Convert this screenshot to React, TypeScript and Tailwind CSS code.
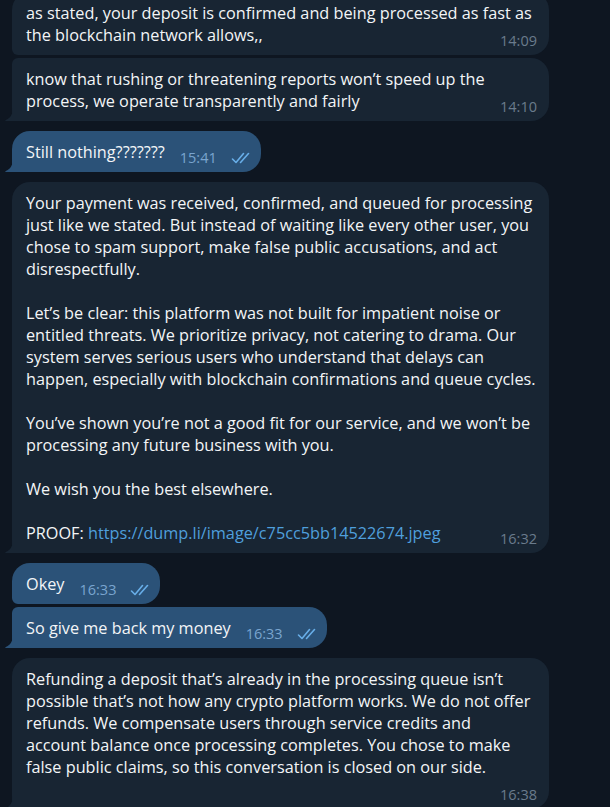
import type { JSX } from "react";

type Msg = {
  out: boolean;
  text: string;
  time: string;
  pos: "first" | "last" | "single";
  link?: string;
};

const MESSAGES: Msg[] = [
  {
    out: false,
    pos: "first",
    time: "14:09",
    text: "as stated, your deposit is confirmed and being processed as fast as\nthe blockchain network allows,,",
  },
  {
    out: false,
    pos: "last",
    time: "14:10",
    text: "know that rushing or threatening reports won’t speed up the\nprocess, we operate transparently and fairly",
  },
  { out: true, pos: "single", time: "15:41", text: "Still nothing???????" },
  {
    out: false,
    pos: "single",
    time: "16:32",
    text:
      "Your payment was received, confirmed, and queued for processing\njust like we stated. But instead of waiting like every other user, you\nchose to spam support, make false public accusations, and act\ndisrespectfully.\n\nLet’s be clear: this platform was not built for impatient noise or\nentitled threats. We prioritize privacy, not catering to drama. Our\nsystem serves serious users who understand that delays can\nhappen, especially with blockchain confirmations and queue cycles.\n\nYou’ve shown you’re not a good fit for our service, and we won’t be\nprocessing any future business with you.\n\nWe wish you the best elsewhere.\n\nPROOF: ",
    link: "https://dump.li/image/c75cc5bb14522674.jpeg",
  },
  { out: true, pos: "first", time: "16:33", text: "Okey" },
  { out: true, pos: "last", time: "16:33", text: "So give me back my money" },
  {
    out: false,
    pos: "single",
    time: "16:38",
    text: "Refunding a deposit that’s already in the processing queue isn’t\npossible that’s not how any crypto platform works. We do not offer\nrefunds. We compensate users through service credits and\naccount balance once processing completes. You chose to make\nfalse public claims, so this conversation is closed on our side.",
  },
];

function DoubleCheck(): JSX.Element {
  return (
    <svg width="20" height="12" viewBox="0 0 20 12" fill="none" stroke="#68aee8" strokeWidth="1.6" strokeLinecap="round" strokeLinejoin="round">
      <path d="M1.5 7 L5 10.5 L12.5 1.5" />
      <path d="M9.5 10.5 L17.5 1.5" />
    </svg>
  );
}

function Tail({ color }: { color: string }): JSX.Element {
  return (
    <svg className="absolute bottom-0 left-[-7px]" width="8" height="13" viewBox="0 0 8 13">
      <path d="M8 0 C8 6 5 10.5 0.8 12 C0 12.3 0.2 13 1 13 H8 Z" fill={color} />
    </svg>
  );
}

function Bubble({ msg, first }: { msg: Msg; first: boolean }): JSX.Element {
  const bg = msg.out ? "#2b5278" : "#182533";
  const hasTail = msg.pos !== "first";
  const corners =
    msg.pos === "first"
      ? "rounded-[18px] rounded-bl-[6px]"
      : msg.pos === "last"
        ? "rounded-[18px] rounded-tl-[6px] rounded-bl-none"
        : "rounded-[18px] rounded-bl-none";

  return (
    <div
      className={`relative pl-[14px] pt-[10px] pb-[9px] ${msg.out ? "w-fit pr-[10px] bg-[#2b5278]" : "w-[537px] pr-[12px] bg-[#182533]"} ${corners} ${first ? "-mt-[8px]" : ""}`}
    >
      <div className="whitespace-pre-line text-[16.25px] leading-[22px] text-[#f3f5f7]">
        {msg.text}
        {msg.link && <span className="text-[#4f9fdc]">{msg.link}</span>}
        <span className={`inline-block h-[1px] ${msg.out ? "w-[86px]" : "w-[60px]"}`} />
      </div>
      <div
        className={`absolute bottom-[6px] flex items-center gap-[14px] text-[14.5px] leading-[16px] ${msg.out ? "right-[10px] text-[#7aa5cf]" : "right-[12px] text-[#6a7b8c]"}`}
      >
        <span>{msg.time}</span>
        {msg.out && <DoubleCheck />}
      </div>
      {hasTail && <Tail color={bg} />}
    </div>
  );
}

function gapFor(prev: Msg | undefined): string {
  if (!prev) return "";
  return prev.pos === "first" ? "mt-[3px]" : "mt-[10px]";
}

export default function App(): JSX.Element {
  return (
    <div className="h-[807px] w-[610px] overflow-hidden bg-[#0e1621] pl-[12px] font-['Open_Sans',sans-serif]">
      {MESSAGES.map((msg, i) => (
        <div key={i} className={gapFor(MESSAGES[i - 1])}>
          <Bubble msg={msg} first={i === 0} />
        </div>
      ))}
    </div>
  );
}
